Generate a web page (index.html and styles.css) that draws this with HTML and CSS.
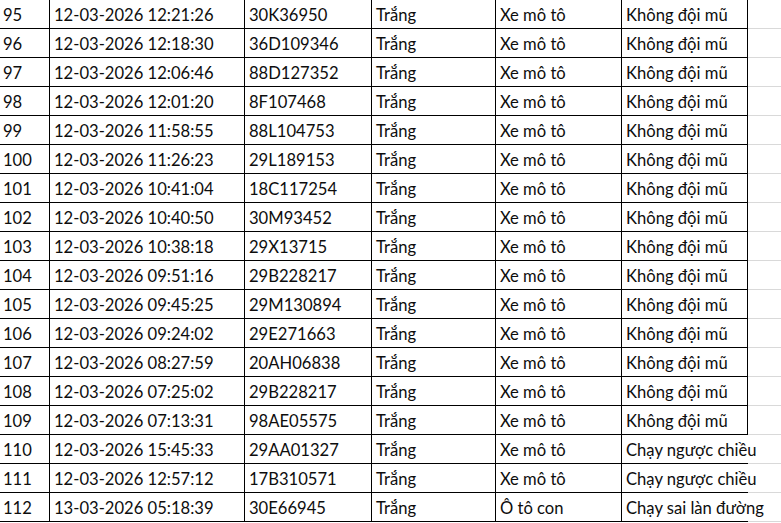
FILE: index.html
```html
<!DOCTYPE html>
<html lang="vi">
<head>
<meta charset="utf-8">
<title>Danh sách vi phạm</title>
<link rel="stylesheet" href="styles.css">
</head>
<body>
<div class="sheet">
<table class="grid">
<colgroup>
<col class="c-no"><col class="c-time"><col class="c-plate"><col class="c-color"><col class="c-type"><col class="c-viol"><col class="c-fill">
</colgroup>
<tbody>
<tr><td>95</td><td>12-03-2026 12:21:26</td><td>30K36950</td><td>Trắng</td><td>Xe mô tô</td><td>Không đội mũ</td><td class="fill"></td></tr>
<tr><td>96</td><td>12-03-2026 12:18:30</td><td>36D109346</td><td>Trắng</td><td>Xe mô tô</td><td>Không đội mũ</td><td class="fill"></td></tr>
<tr><td>97</td><td>12-03-2026 12:06:46</td><td>88D127352</td><td>Trắng</td><td>Xe mô tô</td><td>Không đội mũ</td><td class="fill"></td></tr>
<tr><td>98</td><td>12-03-2026 12:01:20</td><td>8F107468</td><td>Trắng</td><td>Xe mô tô</td><td>Không đội mũ</td><td class="fill"></td></tr>
<tr><td>99</td><td>12-03-2026 11:58:55</td><td>88L104753</td><td>Trắng</td><td>Xe mô tô</td><td>Không đội mũ</td><td class="fill"></td></tr>
<tr><td>100</td><td>12-03-2026 11:26:23</td><td>29L189153</td><td>Trắng</td><td>Xe mô tô</td><td>Không đội mũ</td><td class="fill"></td></tr>
<tr><td>101</td><td>12-03-2026 10:41:04</td><td>18C117254</td><td>Trắng</td><td>Xe mô tô</td><td>Không đội mũ</td><td class="fill"></td></tr>
<tr><td>102</td><td>12-03-2026 10:40:50</td><td>30M93452</td><td>Trắng</td><td>Xe mô tô</td><td>Không đội mũ</td><td class="fill"></td></tr>
<tr><td>103</td><td>12-03-2026 10:38:18</td><td>29X13715</td><td>Trắng</td><td>Xe mô tô</td><td>Không đội mũ</td><td class="fill"></td></tr>
<tr><td>104</td><td>12-03-2026 09:51:16</td><td>29B228217</td><td>Trắng</td><td>Xe mô tô</td><td>Không đội mũ</td><td class="fill"></td></tr>
<tr><td>105</td><td>12-03-2026 09:45:25</td><td>29M130894</td><td>Trắng</td><td>Xe mô tô</td><td>Không đội mũ</td><td class="fill"></td></tr>
<tr><td>106</td><td>12-03-2026 09:24:02</td><td>29E271663</td><td>Trắng</td><td>Xe mô tô</td><td>Không đội mũ</td><td class="fill"></td></tr>
<tr><td>107</td><td>12-03-2026 08:27:59</td><td>20AH06838</td><td>Trắng</td><td>Xe mô tô</td><td>Không đội mũ</td><td class="fill"></td></tr>
<tr><td>108</td><td>12-03-2026 07:25:02</td><td>29B228217</td><td>Trắng</td><td>Xe mô tô</td><td>Không đội mũ</td><td class="fill"></td></tr>
<tr><td>109</td><td>12-03-2026 07:13:31</td><td>98AE05575</td><td>Trắng</td><td>Xe mô tô</td><td>Không đội mũ</td><td class="fill"></td></tr>
<tr><td>110</td><td>12-03-2026 15:45:33</td><td>29AA01327</td><td>Trắng</td><td>Xe mô tô</td><td class="open">Chạy ngược chiều</td><td class="fill"></td></tr>
<tr><td>111</td><td>12-03-2026 12:57:12</td><td>17B310571</td><td>Trắng</td><td>Xe mô tô</td><td class="open">Chạy ngược chiều</td><td class="fill"></td></tr>
<tr><td>112</td><td>13-03-2026 05:18:39</td><td>30E66945</td><td>Trắng</td><td>Ô tô con</td><td class="open">Chạy sai làn đường</td><td class="fill"></td></tr>
</tbody>
</table>
</div>
</body>
</html>
```

FILE: styles.css
```css
html, body {
  margin: 0;
  padding: 0;
  background: #ffffff;
}
body {
  width: 781px;
  height: 523px;
  overflow: hidden;
  font-family: Lato, "Noto Sans", sans-serif;
  font-size: 16.6px;
  color: #0d0d0d;
}
.sheet {
  margin-top: -1px;
  margin-left: -2px;
  width: 783px;
  overflow: hidden;
}
.grid {
  border-collapse: collapse;
  table-layout: fixed;
  width: 783px;
}
.c-no { width: 51px; }
.c-time { width: 195px; }
.c-plate { width: 127px; }
.c-color { width: 124px; }
.c-type { width: 126px; }
.c-viol { width: 126px; }
.c-fill { width: 34px; }
.grid td {
  border: 1px solid #000000;
  padding: 5px 4px 3px 4px;
  line-height: 20px;
  white-space: nowrap;
  overflow: visible;
  vertical-align: bottom;
}
.grid td.open {
  border-right: none;
}
.grid td.fill {
  border-left: none;
  border-right: none;
  border-top: 1px solid #d9d9d9;
  border-bottom: 1px solid #d9d9d9;
}
```
